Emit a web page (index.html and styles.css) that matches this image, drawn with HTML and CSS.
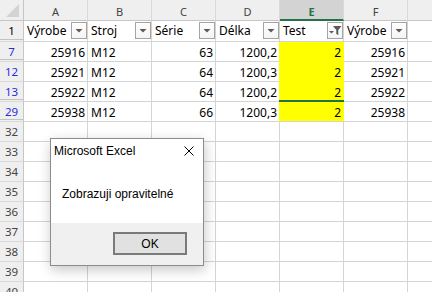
FILE: index.html
```html
<!DOCTYPE html>
<html lang="cs">
<head>
<meta charset="utf-8">
<title>Excel</title>
<link rel="stylesheet" href="styles.css">
</head>
<body>
<div class="sheet">
  <div class="row head">
    <div class="corner"><svg width="23" height="20" viewBox="0 0 23 20"><polygon points="19,4 19,17 6,17" fill="#d3d3d3"/></svg></div>
    <div class="col">A</div>
    <div class="col">B</div>
    <div class="col">C</div>
    <div class="col">D</div>
    <div class="col sel">E</div>
    <div class="col">F</div>
    <div class="col fill"></div>
  </div>

  <div class="row r1">
    <div class="rh gap">1</div>
    <div class="cell th"><span class="lbl">Výrobe</span><span class="fb"><svg width="14" height="15" viewBox="0 0 14 15"><polygon points="3.5,6 10.5,6 7,9.5" fill="#5a5a5a"/></svg></span></div>
    <div class="cell th"><span class="lbl">Stroj</span><span class="fb"><svg width="14" height="15" viewBox="0 0 14 15"><polygon points="3.5,6 10.5,6 7,9.5" fill="#5a5a5a"/></svg></span></div>
    <div class="cell th"><span class="lbl">Série</span><span class="fb"><svg width="14" height="15" viewBox="0 0 14 15"><polygon points="3.5,6 10.5,6 7,9.5" fill="#5a5a5a"/></svg></span></div>
    <div class="cell th"><span class="lbl">Délka</span><span class="fb"><svg width="14" height="15" viewBox="0 0 14 15"><polygon points="3.5,6 10.5,6 7,9.5" fill="#5a5a5a"/></svg></span></div>
    <div class="cell th"><span class="lbl">Test</span><span class="fb"><svg width="14" height="15" viewBox="0 0 14 15"><polygon points="1,8 6,8 3.5,10.5" fill="#5a5a5a"/><polygon points="5,3 13.5,3 10.3,7 10.3,12 8.3,11 8.3,7" fill="#5a5a5a"/></svg></span></div>
    <div class="cell th"><span class="lbl">Výrobe</span><span class="fb"><svg width="14" height="15" viewBox="0 0 14 15"><polygon points="3.5,6 10.5,6 7,9.5" fill="#5a5a5a"/></svg></span></div>
    <div class="cell fill"></div>
  </div>

  <div class="row">
    <div class="rh gap flt">7</div>
    <div class="cell num">25916</div>
    <div class="cell">M12</div>
    <div class="cell num">63</div>
    <div class="cell num">1200,2</div>
    <div class="cell num yel">2</div>
    <div class="cell num">25916</div>
    <div class="cell fill"></div>
  </div>
  <div class="row">
    <div class="rh flt">12</div>
    <div class="cell num">25921</div>
    <div class="cell">M12</div>
    <div class="cell num">64</div>
    <div class="cell num">1200,3</div>
    <div class="cell num yel">2</div>
    <div class="cell num">25921</div>
    <div class="cell fill"></div>
  </div>
  <div class="row">
    <div class="rh gap flt">13</div>
    <div class="cell num">25922</div>
    <div class="cell">M12</div>
    <div class="cell num">64</div>
    <div class="cell num">1200,2</div>
    <div class="cell num yel grn">2</div>
    <div class="cell num">25922</div>
    <div class="cell fill"></div>
  </div>
  <div class="row">
    <div class="rh gap flt">29</div>
    <div class="cell num">25938</div>
    <div class="cell">M12</div>
    <div class="cell num">66</div>
    <div class="cell num">1200,3</div>
    <div class="cell num yel last">2</div>
    <div class="cell num">25938</div>
    <div class="cell fill"></div>
  </div>

  <div class="row"><div class="rh">32</div><div class="cell"></div><div class="cell"></div><div class="cell"></div><div class="cell"></div><div class="cell"></div><div class="cell"></div><div class="cell fill"></div></div>
  <div class="row"><div class="rh">33</div><div class="cell"></div><div class="cell"></div><div class="cell"></div><div class="cell"></div><div class="cell"></div><div class="cell"></div><div class="cell fill"></div></div>
  <div class="row"><div class="rh">34</div><div class="cell"></div><div class="cell"></div><div class="cell"></div><div class="cell"></div><div class="cell"></div><div class="cell"></div><div class="cell fill"></div></div>
  <div class="row"><div class="rh">35</div><div class="cell"></div><div class="cell"></div><div class="cell"></div><div class="cell"></div><div class="cell"></div><div class="cell"></div><div class="cell fill"></div></div>
  <div class="row"><div class="rh">36</div><div class="cell"></div><div class="cell"></div><div class="cell"></div><div class="cell"></div><div class="cell"></div><div class="cell"></div><div class="cell fill"></div></div>
  <div class="row"><div class="rh">37</div><div class="cell"></div><div class="cell"></div><div class="cell"></div><div class="cell"></div><div class="cell"></div><div class="cell"></div><div class="cell fill"></div></div>
  <div class="row"><div class="rh">38</div><div class="cell"></div><div class="cell"></div><div class="cell"></div><div class="cell"></div><div class="cell"></div><div class="cell"></div><div class="cell fill"></div></div>
  <div class="row"><div class="rh">39</div><div class="cell"></div><div class="cell"></div><div class="cell"></div><div class="cell"></div><div class="cell"></div><div class="cell"></div><div class="cell fill"></div></div>
  <div class="row"><div class="rh">40</div><div class="cell"></div><div class="cell"></div><div class="cell"></div><div class="cell"></div><div class="cell"></div><div class="cell"></div><div class="cell fill"></div></div>
</div>

<div class="dialog">
  <div class="dlg-main">
    <div class="dlg-title">
      <span class="dlg-caption">Microsoft Excel</span>
      <svg class="dlg-close" width="10" height="10" viewBox="0 0 10 10"><path d="M0.5 0.5 L9.5 9.5 M9.5 0.5 L0.5 9.5" stroke="#000" stroke-width="1" fill="none"/></svg>
    </div>
    <div class="dlg-msg">Zobrazuji opravitelné</div>
  </div>
  <div class="dlg-foot">
    <div class="btn">OK</div>
  </div>
</div>
</body>
</html>
```

FILE: styles.css
```css
html, body {
  margin: 0;
  padding: 0;
  background: #fff;
  overflow: hidden;
}
body {
  width: 432px;
  height: 292px;
  position: relative;
}
.sheet {
  display: flex;
  flex-direction: column;
  font-family: "Noto Sans", "Open Sans", sans-serif;
  font-size: 12px;
  color: #000;
}
.row {
  display: flex;
  height: 20px;
  flex: none;
}
.head, .r1 {
  height: 21px;
}
.corner {
  width: 24px;
  flex: none;
  box-sizing: border-box;
  background: #efefef;
  border-right: 1px solid #c6c6c6;
  border-bottom: 1px solid #c6c6c6;
}
.corner svg { display: block; }
.col {
  width: 64px;
  flex: none;
  box-sizing: border-box;
  background: #efefef;
  border-right: 1px solid #d9d9d9;
  border-bottom: 1px solid #c6c6c6;
  color: #444;
  font-size: 11px;
  line-height: 13px;
  display: flex;
  align-items: flex-end;
  justify-content: center;
  padding-bottom: 2px;
}
.col.sel {
  background: #d3d3d3;
  color: #217346;
  font-weight: bold;
  border-bottom: 2px solid #217346;
  padding-bottom: 1px;
}
.col.fill, .cell.fill {
  flex: 1;
  width: auto;
  border-right: none;
}
.rh {
  width: 24px;
  flex: none;
  box-sizing: border-box;
  background: #efefef;
  border-right: 1px solid #c6c6c6;
  border-bottom: 1px solid #d9d9d9;
  color: #444;
  font-size: 11.5px;
  line-height: 14px;
  display: flex;
  align-items: flex-end;
  justify-content: center;
  padding-bottom: 2px;
}
.rh.flt { color: #2a2ae0; }
.r1 .rh { color: #000; padding-bottom: 3px; }
.rh.gap {
  box-shadow: inset 0 -1px 0 #efefef, inset 0 -2px 0 #c2c2c2;
}
.cell {
  width: 64px;
  flex: none;
  box-sizing: border-box;
  border-right: 1px solid #d4d4d4;
  border-bottom: 1px solid #d4d4d4;
  display: flex;
  align-items: flex-end;
  padding: 0 3px 1px 3px;
  line-height: 14px;
  white-space: nowrap;
  position: relative;
}
.cell.num {
  justify-content: flex-end;
  padding-right: 2px;
}
.cell.th {
  padding-right: 0;
  padding-bottom: 3px;
}
.lbl {
  flex: 1;
  min-width: 0;
}
.fb {
  flex: none;
  align-self: flex-start;
  margin-top: 1px;
  width: 16px;
  height: 17px;
  box-sizing: border-box;
  border: 1px solid #a3a3a3;
  background: linear-gradient(#ffffff, #f4f4f4);
  position: relative;
  z-index: 1;
}
.fb svg { display: block; }
.cell.yel {
  background: #ffff00;
  border-right-color: #ffff00;
  border-bottom-color: #ffff00;
  box-shadow: -1px 0 0 #ffff00;
}
.cell.yel.last {
  border-bottom-color: #d4d4d4;
}
.cell.grn::after {
  content: "";
  position: absolute;
  left: -1px;
  right: -1px;
  bottom: -1px;
  height: 2px;
  background: #217346;
}

/* dialog */
.dialog {
  position: absolute;
  left: 50px;
  top: 138px;
  width: 154px;
  height: 128px;
  box-sizing: border-box;
  border: 1px solid #8c8c8c;
  background: #fff;
  box-shadow: 1px 4px 12px rgba(0, 0, 0, 0.22);
  display: flex;
  flex-direction: column;
  font-family: "Liberation Sans", Arial, sans-serif;
  font-size: 12px;
  line-height: 14px;
  color: #000;
  z-index: 2;
}
.dlg-main {
  height: 84px;
  flex: none;
  background: #fff;
}
.dlg-title {
  display: flex;
  justify-content: space-between;
  align-items: flex-start;
  padding: 5px 9px 0 3px;
}
.dlg-close {
  display: block;
  margin-top: 2px;
}
.dlg-msg {
  margin-top: 29px;
  padding-left: 11px;
}
.dlg-foot {
  flex: 1;
  background: #f0f0f0;
  display: flex;
  justify-content: flex-end;
  align-items: flex-start;
  padding: 9px 16px 0 0;
}
.btn {
  width: 74px;
  height: 23px;
  box-sizing: border-box;
  border: 2px solid #7a7a7a;
  background: #e1e1e1;
  display: flex;
  align-items: center;
  justify-content: center;
}
```
